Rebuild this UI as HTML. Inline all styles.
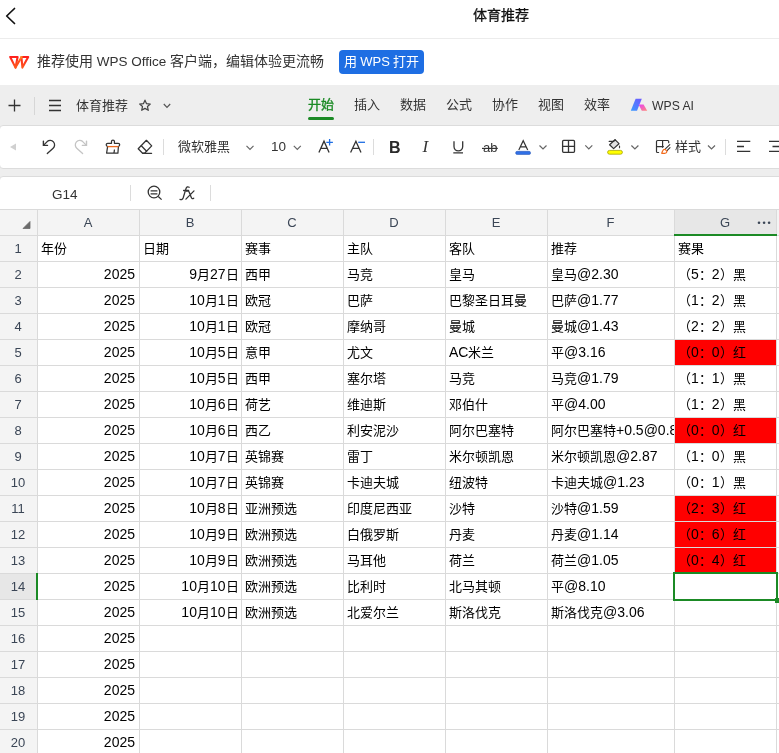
<!DOCTYPE html>
<html lang="zh-CN"><head><meta charset="utf-8"><title>体育推荐</title><style>
*{margin:0;padding:0;box-sizing:border-box}
html,body{width:779px;height:753px;overflow:hidden;background:#fff;font-family:"Liberation Sans",sans-serif;color:#000}
#root{position:absolute;left:0;top:0;width:779px;height:753px;background:#fff;will-change:transform;overflow:hidden}
.a{position:absolute;white-space:nowrap}
.t14{font-size:14px;line-height:20px}
.t13{font-size:13px;line-height:18px}
.cell{position:absolute;height:25px;line-height:25px;font-size:14px;white-space:nowrap;overflow:hidden;color:#000}
.rn{position:absolute;left:0;width:36px;height:25px;line-height:25px;text-align:center;font-size:13px;color:#3b4656}
.ch{position:absolute;top:210px;height:25px;line-height:25px;text-align:center;font-size:13px;color:#3b4656}
#ov{position:absolute;left:0;top:0}
</style></head><body>
<div id="root">
<div class="a t14" style="left:473px;top:5px;color:#111;-webkit-text-stroke:0.3px #111">体育推荐</div>
<div class="a" style="left:0;top:38px;width:779px;height:1px;background:#ececec"></div>
<div class="a t14" style="left:37px;top:51px;color:#333"><span style="font-size:14px">推荐使用</span><span style="font-size:13.5px"> WPS Office </span><span style="font-size:14px">客户端，编辑体验更流畅</span></div>
<div class="a" style="left:339px;top:50px;width:85px;height:24px;background:#1e6ee3;border-radius:4px;color:#fff;font-size:13px;line-height:24px;text-align:center"><span style="font-size:13px">用</span><span style="font-size:13px"> WPS </span><span style="font-size:13px">打开</span></div>
<div class="a" style="left:0;top:85px;width:779px;height:124px;background:#eeeeee"></div>
<div class="a" style="left:34px;top:97px;width:1px;height:18px;background:#d6d6d6"></div>
<div class="a t13" style="left:76px;top:97px;color:#333">体育推荐</div>
<div class="a t13" style="left:308px;top:96px;color:#1b8a25;-webkit-text-stroke:0.35px #1b8a25">开始</div>
<div class="a" style="left:308px;top:117px;width:26px;height:3px;background:#1b8a25;border-radius:1.5px"></div>
<div class="a t13" style="left:354px;top:96px;color:#333">插入</div>
<div class="a t13" style="left:400px;top:96px;color:#333">数据</div>
<div class="a t13" style="left:446px;top:96px;color:#333">公式</div>
<div class="a t13" style="left:492px;top:96px;color:#333">协作</div>
<div class="a t13" style="left:538px;top:96px;color:#333">视图</div>
<div class="a t13" style="left:584px;top:96px;color:#333">效率</div>
<div class="a" style="left:652px;top:97.3px;font-size:12.2px;line-height:18px;color:#333">WPS AI</div>
<div class="a" style="left:-1px;top:125px;width:790px;height:44px;background:#fff;border:1px solid #dcdcdc;border-radius:4px"></div>
<div class="a" style="left:163px;top:139px;width:1px;height:16px;background:#dcdcdc"></div>
<div class="a t13" style="left:178px;top:138px;color:#333">微软雅黑</div>
<div class="a" style="left:271px;top:138px;font-size:13.5px;line-height:18px;color:#333">10</div>
<div class="a" style="left:373px;top:139px;width:1px;height:16px;background:#dcdcdc"></div>
<div class="a" style="left:389px;top:138px;font-size:16px;line-height:20px;color:#2a2a2a;font-weight:bold">B</div>
<div class="a" style="left:422.5px;top:137px;font-size:17px;line-height:20px;color:#333;font-style:italic;font-family:'Liberation Serif',serif">I</div>
<div class="a" style="left:483px;top:138px;font-size:13px;line-height:20px;color:#333">ab</div>
<div class="a t13" style="left:675px;top:138px;color:#333">样式</div>
<div class="a" style="left:725px;top:139px;width:1px;height:16px;background:#dcdcdc"></div>
<div class="a" style="left:-1px;top:176px;width:790px;height:40px;background:#fff;border:1px solid #dcdcdc;border-radius:4px 4px 0 0"></div>
<div class="a" style="left:52px;top:184.5px;font-size:13.5px;line-height:20px;color:#333">G14</div>
<div class="a" style="left:130px;top:185px;width:1px;height:16px;background:#dcdcdc"></div>
<div class="a" style="left:210px;top:185px;width:1px;height:16px;background:#dcdcdc"></div>
<div class="a" style="left:0;top:209px;width:779px;height:26px;background:#f4f4f4"></div>
<div class="a" style="left:0;top:235px;width:37px;height:518px;background:#f4f4f4"></div>
<div class="a" style="left:674px;top:210px;width:102px;height:25px;background:#e7e7e7"></div>
<div class="a" style="left:0;top:574px;width:37px;height:25px;background:#e7e7e7"></div>
<div class="a" style="left:674px;top:339px;width:102px;height:26px;background:#ff0000"></div>
<div class="a" style="left:674px;top:417px;width:102px;height:26px;background:#ff0000"></div>
<div class="a" style="left:674px;top:495px;width:102px;height:26px;background:#ff0000"></div>
<div class="a" style="left:674px;top:521px;width:102px;height:26px;background:#ff0000"></div>
<div class="a" style="left:674px;top:547px;width:102px;height:26px;background:#ff0000"></div>
<div class="a" style="left:0;top:209px;width:779px;height:1px;background:#dadada"></div>
<div class="a" style="left:0;top:235px;width:779px;height:1px;background:#dadada"></div>
<div class="a" style="left:0;top:261px;width:779px;height:1px;background:#dadada"></div>
<div class="a" style="left:0;top:287px;width:779px;height:1px;background:#dadada"></div>
<div class="a" style="left:0;top:313px;width:779px;height:1px;background:#dadada"></div>
<div class="a" style="left:0;top:339px;width:779px;height:1px;background:#dadada"></div>
<div class="a" style="left:0;top:365px;width:779px;height:1px;background:#dadada"></div>
<div class="a" style="left:0;top:391px;width:779px;height:1px;background:#dadada"></div>
<div class="a" style="left:0;top:417px;width:779px;height:1px;background:#dadada"></div>
<div class="a" style="left:0;top:443px;width:779px;height:1px;background:#dadada"></div>
<div class="a" style="left:0;top:469px;width:779px;height:1px;background:#dadada"></div>
<div class="a" style="left:0;top:495px;width:779px;height:1px;background:#dadada"></div>
<div class="a" style="left:0;top:521px;width:779px;height:1px;background:#dadada"></div>
<div class="a" style="left:0;top:547px;width:779px;height:1px;background:#dadada"></div>
<div class="a" style="left:0;top:573px;width:779px;height:1px;background:#dadada"></div>
<div class="a" style="left:0;top:599px;width:779px;height:1px;background:#dadada"></div>
<div class="a" style="left:0;top:625px;width:779px;height:1px;background:#dadada"></div>
<div class="a" style="left:0;top:651px;width:779px;height:1px;background:#dadada"></div>
<div class="a" style="left:0;top:677px;width:779px;height:1px;background:#dadada"></div>
<div class="a" style="left:0;top:703px;width:779px;height:1px;background:#dadada"></div>
<div class="a" style="left:0;top:729px;width:779px;height:1px;background:#dadada"></div>
<div class="a" style="left:37px;top:209px;width:1px;height:544px;background:#dadada"></div>
<div class="a" style="left:139px;top:209px;width:1px;height:544px;background:#dadada"></div>
<div class="a" style="left:241px;top:209px;width:1px;height:544px;background:#dadada"></div>
<div class="a" style="left:343px;top:209px;width:1px;height:544px;background:#dadada"></div>
<div class="a" style="left:445px;top:209px;width:1px;height:544px;background:#dadada"></div>
<div class="a" style="left:547px;top:209px;width:1px;height:544px;background:#dadada"></div>
<div class="a" style="left:674px;top:209px;width:1px;height:544px;background:#dadada"></div>
<div class="a" style="left:776px;top:209px;width:1px;height:544px;background:#dadada"></div>
<div class="ch" style="left:37px;width:102px">A</div>
<div class="ch" style="left:139px;width:102px">B</div>
<div class="ch" style="left:241px;width:102px">C</div>
<div class="ch" style="left:343px;width:102px">D</div>
<div class="ch" style="left:445px;width:102px">E</div>
<div class="ch" style="left:547px;width:127px">F</div>
<div class="ch" style="left:674px;width:102px">G</div>
<div class="a" style="left:674px;top:234px;width:103px;height:2px;background:#1b8a25"></div>
<div class="rn" style="top:236px">1</div>
<div class="rn" style="top:262px">2</div>
<div class="rn" style="top:288px">3</div>
<div class="rn" style="top:314px">4</div>
<div class="rn" style="top:340px">5</div>
<div class="rn" style="top:366px">6</div>
<div class="rn" style="top:392px">7</div>
<div class="rn" style="top:418px">8</div>
<div class="rn" style="top:444px">9</div>
<div class="rn" style="top:470px">10</div>
<div class="rn" style="top:496px">11</div>
<div class="rn" style="top:522px">12</div>
<div class="rn" style="top:548px">13</div>
<div class="rn" style="top:574px">14</div>
<div class="rn" style="top:600px">15</div>
<div class="rn" style="top:626px">16</div>
<div class="rn" style="top:652px">17</div>
<div class="rn" style="top:678px">18</div>
<div class="rn" style="top:704px">19</div>
<div class="rn" style="top:730px">20</div>
<div class="a" style="left:36px;top:573px;width:2px;height:27px;background:#1b8a25"></div>
<div class="cell" style="left:38px;width:101px;top:236px;padding-left:3px"><span style="font-size:13px">年份</span></div>
<div class="cell" style="left:140px;width:101px;top:236px;padding-left:3px"><span style="font-size:13px">日期</span></div>
<div class="cell" style="left:242px;width:101px;top:236px;padding-left:3px"><span style="font-size:13px">赛事</span></div>
<div class="cell" style="left:344px;width:101px;top:236px;padding-left:3px"><span style="font-size:13px">主队</span></div>
<div class="cell" style="left:446px;width:101px;top:236px;padding-left:3px"><span style="font-size:13px">客队</span></div>
<div class="cell" style="left:548px;width:126px;top:236px;padding-left:3px"><span style="font-size:13px">推荐</span></div>
<div class="cell" style="left:675px;width:101px;top:236px;padding-left:3px"><span style="font-size:13px">赛果</span></div>
<div class="cell" style="left:38px;width:101px;top:262px;text-align:right;padding-right:4px"><span style="font-size:14px">2025</span></div>
<div class="cell" style="left:140px;width:101px;top:262px;text-align:right;padding-right:2.5px"><span style="font-size:14px">9</span><span style="font-size:13px">月</span><span style="font-size:14px">27</span><span style="font-size:13px">日</span></div>
<div class="cell" style="left:242px;width:101px;top:262px;padding-left:3px"><span style="font-size:13px">西甲</span></div>
<div class="cell" style="left:344px;width:101px;top:262px;padding-left:3px"><span style="font-size:13px">马竞</span></div>
<div class="cell" style="left:446px;width:101px;top:262px;padding-left:3px"><span style="font-size:13px">皇马</span></div>
<div class="cell" style="left:548px;width:126px;top:262px;padding-left:3px"><span style="font-size:13px">皇马</span><span style="font-size:14px">@2.30</span></div>
<div class="cell" style="left:675px;width:101px;top:262px;padding-left:3px"><span style="font-size:13px">（</span><span style="font-size:14px">5</span><span style="font-size:13px">：</span><span style="font-size:14px">2</span><span style="font-size:13px">）黑</span></div>
<div class="cell" style="left:38px;width:101px;top:288px;text-align:right;padding-right:4px"><span style="font-size:14px">2025</span></div>
<div class="cell" style="left:140px;width:101px;top:288px;text-align:right;padding-right:2.5px"><span style="font-size:14px">10</span><span style="font-size:13px">月</span><span style="font-size:14px">1</span><span style="font-size:13px">日</span></div>
<div class="cell" style="left:242px;width:101px;top:288px;padding-left:3px"><span style="font-size:13px">欧冠</span></div>
<div class="cell" style="left:344px;width:101px;top:288px;padding-left:3px"><span style="font-size:13px">巴萨</span></div>
<div class="cell" style="left:446px;width:101px;top:288px;padding-left:3px"><span style="font-size:13px">巴黎圣日耳曼</span></div>
<div class="cell" style="left:548px;width:126px;top:288px;padding-left:3px"><span style="font-size:13px">巴萨</span><span style="font-size:14px">@1.77</span></div>
<div class="cell" style="left:675px;width:101px;top:288px;padding-left:3px"><span style="font-size:13px">（</span><span style="font-size:14px">1</span><span style="font-size:13px">：</span><span style="font-size:14px">2</span><span style="font-size:13px">）黑</span></div>
<div class="cell" style="left:38px;width:101px;top:314px;text-align:right;padding-right:4px"><span style="font-size:14px">2025</span></div>
<div class="cell" style="left:140px;width:101px;top:314px;text-align:right;padding-right:2.5px"><span style="font-size:14px">10</span><span style="font-size:13px">月</span><span style="font-size:14px">1</span><span style="font-size:13px">日</span></div>
<div class="cell" style="left:242px;width:101px;top:314px;padding-left:3px"><span style="font-size:13px">欧冠</span></div>
<div class="cell" style="left:344px;width:101px;top:314px;padding-left:3px"><span style="font-size:13px">摩纳哥</span></div>
<div class="cell" style="left:446px;width:101px;top:314px;padding-left:3px"><span style="font-size:13px">曼城</span></div>
<div class="cell" style="left:548px;width:126px;top:314px;padding-left:3px"><span style="font-size:13px">曼城</span><span style="font-size:14px">@1.43</span></div>
<div class="cell" style="left:675px;width:101px;top:314px;padding-left:3px"><span style="font-size:13px">（</span><span style="font-size:14px">2</span><span style="font-size:13px">：</span><span style="font-size:14px">2</span><span style="font-size:13px">）黑</span></div>
<div class="cell" style="left:38px;width:101px;top:340px;text-align:right;padding-right:4px"><span style="font-size:14px">2025</span></div>
<div class="cell" style="left:140px;width:101px;top:340px;text-align:right;padding-right:2.5px"><span style="font-size:14px">10</span><span style="font-size:13px">月</span><span style="font-size:14px">5</span><span style="font-size:13px">日</span></div>
<div class="cell" style="left:242px;width:101px;top:340px;padding-left:3px"><span style="font-size:13px">意甲</span></div>
<div class="cell" style="left:344px;width:101px;top:340px;padding-left:3px"><span style="font-size:13px">尤文</span></div>
<div class="cell" style="left:446px;width:101px;top:340px;padding-left:3px"><span style="font-size:14px">AC</span><span style="font-size:13px">米兰</span></div>
<div class="cell" style="left:548px;width:126px;top:340px;padding-left:3px"><span style="font-size:13px">平</span><span style="font-size:14px">@3.16</span></div>
<div class="cell" style="left:675px;width:101px;top:340px;padding-left:3px"><span style="font-size:13px">（</span><span style="font-size:14px">0</span><span style="font-size:13px">：</span><span style="font-size:14px">0</span><span style="font-size:13px">）红</span></div>
<div class="cell" style="left:38px;width:101px;top:366px;text-align:right;padding-right:4px"><span style="font-size:14px">2025</span></div>
<div class="cell" style="left:140px;width:101px;top:366px;text-align:right;padding-right:2.5px"><span style="font-size:14px">10</span><span style="font-size:13px">月</span><span style="font-size:14px">5</span><span style="font-size:13px">日</span></div>
<div class="cell" style="left:242px;width:101px;top:366px;padding-left:3px"><span style="font-size:13px">西甲</span></div>
<div class="cell" style="left:344px;width:101px;top:366px;padding-left:3px"><span style="font-size:13px">塞尔塔</span></div>
<div class="cell" style="left:446px;width:101px;top:366px;padding-left:3px"><span style="font-size:13px">马竞</span></div>
<div class="cell" style="left:548px;width:126px;top:366px;padding-left:3px"><span style="font-size:13px">马竞</span><span style="font-size:14px">@1.79</span></div>
<div class="cell" style="left:675px;width:101px;top:366px;padding-left:3px"><span style="font-size:13px">（</span><span style="font-size:14px">1</span><span style="font-size:13px">：</span><span style="font-size:14px">1</span><span style="font-size:13px">）黑</span></div>
<div class="cell" style="left:38px;width:101px;top:392px;text-align:right;padding-right:4px"><span style="font-size:14px">2025</span></div>
<div class="cell" style="left:140px;width:101px;top:392px;text-align:right;padding-right:2.5px"><span style="font-size:14px">10</span><span style="font-size:13px">月</span><span style="font-size:14px">6</span><span style="font-size:13px">日</span></div>
<div class="cell" style="left:242px;width:101px;top:392px;padding-left:3px"><span style="font-size:13px">荷艺</span></div>
<div class="cell" style="left:344px;width:101px;top:392px;padding-left:3px"><span style="font-size:13px">维迪斯</span></div>
<div class="cell" style="left:446px;width:101px;top:392px;padding-left:3px"><span style="font-size:13px">邓伯什</span></div>
<div class="cell" style="left:548px;width:126px;top:392px;padding-left:3px"><span style="font-size:13px">平</span><span style="font-size:14px">@4.00</span></div>
<div class="cell" style="left:675px;width:101px;top:392px;padding-left:3px"><span style="font-size:13px">（</span><span style="font-size:14px">1</span><span style="font-size:13px">：</span><span style="font-size:14px">2</span><span style="font-size:13px">）黑</span></div>
<div class="cell" style="left:38px;width:101px;top:418px;text-align:right;padding-right:4px"><span style="font-size:14px">2025</span></div>
<div class="cell" style="left:140px;width:101px;top:418px;text-align:right;padding-right:2.5px"><span style="font-size:14px">10</span><span style="font-size:13px">月</span><span style="font-size:14px">6</span><span style="font-size:13px">日</span></div>
<div class="cell" style="left:242px;width:101px;top:418px;padding-left:3px"><span style="font-size:13px">西乙</span></div>
<div class="cell" style="left:344px;width:101px;top:418px;padding-left:3px"><span style="font-size:13px">利安泥沙</span></div>
<div class="cell" style="left:446px;width:101px;top:418px;padding-left:3px"><span style="font-size:13px">阿尔巴塞特</span></div>
<div class="cell" style="left:548px;width:126px;top:418px;padding-left:3px"><span style="font-size:13px">阿尔巴塞特</span><span style="font-size:14px">+0.5@0.8</span></div>
<div class="cell" style="left:675px;width:101px;top:418px;padding-left:3px"><span style="font-size:13px">（</span><span style="font-size:14px">0</span><span style="font-size:13px">：</span><span style="font-size:14px">0</span><span style="font-size:13px">）红</span></div>
<div class="cell" style="left:38px;width:101px;top:444px;text-align:right;padding-right:4px"><span style="font-size:14px">2025</span></div>
<div class="cell" style="left:140px;width:101px;top:444px;text-align:right;padding-right:2.5px"><span style="font-size:14px">10</span><span style="font-size:13px">月</span><span style="font-size:14px">7</span><span style="font-size:13px">日</span></div>
<div class="cell" style="left:242px;width:101px;top:444px;padding-left:3px"><span style="font-size:13px">英锦赛</span></div>
<div class="cell" style="left:344px;width:101px;top:444px;padding-left:3px"><span style="font-size:13px">雷丁</span></div>
<div class="cell" style="left:446px;width:101px;top:444px;padding-left:3px"><span style="font-size:13px">米尔顿凯恩</span></div>
<div class="cell" style="left:548px;width:126px;top:444px;padding-left:3px"><span style="font-size:13px">米尔顿凯恩</span><span style="font-size:14px">@2.87</span></div>
<div class="cell" style="left:675px;width:101px;top:444px;padding-left:3px"><span style="font-size:13px">（</span><span style="font-size:14px">1</span><span style="font-size:13px">：</span><span style="font-size:14px">0</span><span style="font-size:13px">）黑</span></div>
<div class="cell" style="left:38px;width:101px;top:470px;text-align:right;padding-right:4px"><span style="font-size:14px">2025</span></div>
<div class="cell" style="left:140px;width:101px;top:470px;text-align:right;padding-right:2.5px"><span style="font-size:14px">10</span><span style="font-size:13px">月</span><span style="font-size:14px">7</span><span style="font-size:13px">日</span></div>
<div class="cell" style="left:242px;width:101px;top:470px;padding-left:3px"><span style="font-size:13px">英锦赛</span></div>
<div class="cell" style="left:344px;width:101px;top:470px;padding-left:3px"><span style="font-size:13px">卡迪夫城</span></div>
<div class="cell" style="left:446px;width:101px;top:470px;padding-left:3px"><span style="font-size:13px">纽波特</span></div>
<div class="cell" style="left:548px;width:126px;top:470px;padding-left:3px"><span style="font-size:13px">卡迪夫城</span><span style="font-size:14px">@1.23</span></div>
<div class="cell" style="left:675px;width:101px;top:470px;padding-left:3px"><span style="font-size:13px">（</span><span style="font-size:14px">0</span><span style="font-size:13px">：</span><span style="font-size:14px">1</span><span style="font-size:13px">）黑</span></div>
<div class="cell" style="left:38px;width:101px;top:496px;text-align:right;padding-right:4px"><span style="font-size:14px">2025</span></div>
<div class="cell" style="left:140px;width:101px;top:496px;text-align:right;padding-right:2.5px"><span style="font-size:14px">10</span><span style="font-size:13px">月</span><span style="font-size:14px">8</span><span style="font-size:13px">日</span></div>
<div class="cell" style="left:242px;width:101px;top:496px;padding-left:3px"><span style="font-size:13px">亚洲预选</span></div>
<div class="cell" style="left:344px;width:101px;top:496px;padding-left:3px"><span style="font-size:13px">印度尼西亚</span></div>
<div class="cell" style="left:446px;width:101px;top:496px;padding-left:3px"><span style="font-size:13px">沙特</span></div>
<div class="cell" style="left:548px;width:126px;top:496px;padding-left:3px"><span style="font-size:13px">沙特</span><span style="font-size:14px">@1.59</span></div>
<div class="cell" style="left:675px;width:101px;top:496px;padding-left:3px"><span style="font-size:13px">（</span><span style="font-size:14px">2</span><span style="font-size:13px">：</span><span style="font-size:14px">3</span><span style="font-size:13px">）红</span></div>
<div class="cell" style="left:38px;width:101px;top:522px;text-align:right;padding-right:4px"><span style="font-size:14px">2025</span></div>
<div class="cell" style="left:140px;width:101px;top:522px;text-align:right;padding-right:2.5px"><span style="font-size:14px">10</span><span style="font-size:13px">月</span><span style="font-size:14px">9</span><span style="font-size:13px">日</span></div>
<div class="cell" style="left:242px;width:101px;top:522px;padding-left:3px"><span style="font-size:13px">欧洲预选</span></div>
<div class="cell" style="left:344px;width:101px;top:522px;padding-left:3px"><span style="font-size:13px">白俄罗斯</span></div>
<div class="cell" style="left:446px;width:101px;top:522px;padding-left:3px"><span style="font-size:13px">丹麦</span></div>
<div class="cell" style="left:548px;width:126px;top:522px;padding-left:3px"><span style="font-size:13px">丹麦</span><span style="font-size:14px">@1.14</span></div>
<div class="cell" style="left:675px;width:101px;top:522px;padding-left:3px"><span style="font-size:13px">（</span><span style="font-size:14px">0</span><span style="font-size:13px">：</span><span style="font-size:14px">6</span><span style="font-size:13px">）红</span></div>
<div class="cell" style="left:38px;width:101px;top:548px;text-align:right;padding-right:4px"><span style="font-size:14px">2025</span></div>
<div class="cell" style="left:140px;width:101px;top:548px;text-align:right;padding-right:2.5px"><span style="font-size:14px">10</span><span style="font-size:13px">月</span><span style="font-size:14px">9</span><span style="font-size:13px">日</span></div>
<div class="cell" style="left:242px;width:101px;top:548px;padding-left:3px"><span style="font-size:13px">欧洲预选</span></div>
<div class="cell" style="left:344px;width:101px;top:548px;padding-left:3px"><span style="font-size:13px">马耳他</span></div>
<div class="cell" style="left:446px;width:101px;top:548px;padding-left:3px"><span style="font-size:13px">荷兰</span></div>
<div class="cell" style="left:548px;width:126px;top:548px;padding-left:3px"><span style="font-size:13px">荷兰</span><span style="font-size:14px">@1.05</span></div>
<div class="cell" style="left:675px;width:101px;top:548px;padding-left:3px"><span style="font-size:13px">（</span><span style="font-size:14px">0</span><span style="font-size:13px">：</span><span style="font-size:14px">4</span><span style="font-size:13px">）红</span></div>
<div class="cell" style="left:38px;width:101px;top:574px;text-align:right;padding-right:4px"><span style="font-size:14px">2025</span></div>
<div class="cell" style="left:140px;width:101px;top:574px;text-align:right;padding-right:2.5px"><span style="font-size:14px">10</span><span style="font-size:13px">月</span><span style="font-size:14px">10</span><span style="font-size:13px">日</span></div>
<div class="cell" style="left:242px;width:101px;top:574px;padding-left:3px"><span style="font-size:13px">欧洲预选</span></div>
<div class="cell" style="left:344px;width:101px;top:574px;padding-left:3px"><span style="font-size:13px">比利时</span></div>
<div class="cell" style="left:446px;width:101px;top:574px;padding-left:3px"><span style="font-size:13px">北马其顿</span></div>
<div class="cell" style="left:548px;width:126px;top:574px;padding-left:3px"><span style="font-size:13px">平</span><span style="font-size:14px">@8.10</span></div>
<div class="cell" style="left:38px;width:101px;top:600px;text-align:right;padding-right:4px"><span style="font-size:14px">2025</span></div>
<div class="cell" style="left:140px;width:101px;top:600px;text-align:right;padding-right:2.5px"><span style="font-size:14px">10</span><span style="font-size:13px">月</span><span style="font-size:14px">10</span><span style="font-size:13px">日</span></div>
<div class="cell" style="left:242px;width:101px;top:600px;padding-left:3px"><span style="font-size:13px">欧洲预选</span></div>
<div class="cell" style="left:344px;width:101px;top:600px;padding-left:3px"><span style="font-size:13px">北爱尔兰</span></div>
<div class="cell" style="left:446px;width:101px;top:600px;padding-left:3px"><span style="font-size:13px">斯洛伐克</span></div>
<div class="cell" style="left:548px;width:126px;top:600px;padding-left:3px"><span style="font-size:13px">斯洛伐克</span><span style="font-size:14px">@3.06</span></div>
<div class="cell" style="left:38px;width:101px;top:626px;text-align:right;padding-right:4px"><span style="font-size:14px">2025</span></div>
<div class="cell" style="left:38px;width:101px;top:652px;text-align:right;padding-right:4px"><span style="font-size:14px">2025</span></div>
<div class="cell" style="left:38px;width:101px;top:678px;text-align:right;padding-right:4px"><span style="font-size:14px">2025</span></div>
<div class="cell" style="left:38px;width:101px;top:704px;text-align:right;padding-right:4px"><span style="font-size:14px">2025</span></div>
<div class="cell" style="left:38px;width:101px;top:730px;text-align:right;padding-right:4px"><span style="font-size:14px">2025</span></div>
<div class="a" style="left:673px;top:572px;width:105px;height:29px;border:2px solid #1b8a25"></div>
<div class="a" style="left:775px;top:598px;width:4px;height:5px;background:#1b8a25"></div>
<svg id="ov" width="779" height="753" viewBox="0 0 779 753"><polyline points="14.5,8.5 6.7,16 14.5,23.5" fill="none" stroke="#111" stroke-width="1.7" stroke-linecap="round" stroke-linejoin="round"/><defs><linearGradient id="wo" gradientUnits="userSpaceOnUse" x1="0" y1="56" x2="0" y2="68"><stop offset="0" stop-color="#ff9a1f"/><stop offset="0.5" stop-color="#ff4a1a"/><stop offset="1" stop-color="#ff5a1e"/></linearGradient><linearGradient id="wr" gradientUnits="userSpaceOnUse" x1="0" y1="56" x2="0" y2="68"><stop offset="0" stop-color="#ff1c1c"/><stop offset="1" stop-color="#ff5a1e"/></linearGradient><linearGradient id="aib" x1="1" y1="0" x2="0" y2="1"><stop offset="0" stop-color="#6f56ff"/><stop offset="1" stop-color="#3a9cff"/></linearGradient><linearGradient id="aip" x1="0" y1="0" x2="1" y2="1"><stop offset="0" stop-color="#e83ff5"/><stop offset="1" stop-color="#ff8a7a"/></linearGradient></defs><g fill="none" stroke="url(#wr)" stroke-width="2.1" stroke-linejoin="round" stroke-linecap="round"><path d="M10.2,57 H17.6 L15.5,67.6 Z"/><path d="M21.4,57 H28.2 L22.4,67.6 Z"/></g><path d="M15.5,67.6 L21.6,57" stroke="url(#wo)" stroke-width="2.1" stroke-linecap="round"/><path d="M14.5,99.5 V111.5 M8.5,105.5 H20.5" stroke="#333" stroke-width="1.3"/><path d="M49,100.5 H61 M49,105.5 H61 M49,110.5 H61" stroke="#333" stroke-width="1.3"/><g transform="translate(138.5,99) scale(0.54)"><path d="M12,2.2 L14.9,8.6 L21.8,9.3 L16.6,14 L18.1,20.9 L12,17.3 L5.9,20.9 L7.4,14 L2.2,9.3 L9.1,8.6 Z" fill="none" stroke="#444" stroke-width="2.3" stroke-linejoin="round"/></g><polyline points="163.8,104 167,107.3 170.2,104" fill="none" stroke="#555" stroke-width="1.2"/><path d="M630.8,110.8 L635.6,98.8 L641.8,98.8 L637,110.8 Z" fill="url(#aib)"/><path d="M638.6,104.6 L643.6,104.6 L647.2,110.8 L641.8,110.8 Z" fill="url(#aip)"/><path d="M16,143.5 V150.5 L10,147 Z" fill="#d0d0d0"/><path d="M43.7,145.1 L47.2,141.6 A4.4,4.4 0 1 1 53.13,148.17 L47.3,153.6" fill="none" stroke="#333" stroke-width="1.3" stroke-linecap="round"/><path d="M43.4,141.1 V145.4 H47.5" fill="none" stroke="#333" stroke-width="1.4" stroke-linecap="round"/><g transform="translate(129.9,0) scale(-1,1)"><path d="M43.7,145.1 L47.2,141.6 A4.4,4.4 0 1 1 53.13,148.17 L47.3,153.6" fill="none" stroke="#c4c4c4" stroke-width="1.3" stroke-linecap="round"/><path d="M43.4,141.1 V145.4 H47.5" fill="none" stroke="#c4c4c4" stroke-width="1.4" stroke-linecap="round"/></g><path d="M107.6,146.3 Q106.2,146.3 106.2,144.8 Q106.2,143.3 107.8,143.3 H111.5 V141.3 Q111.5,140 112.95,140 Q114.4,140 114.4,141.3 V143.3 H118.2 Q119.7,143.3 119.7,144.8 Q119.7,146.3 118.3,146.3" fill="none" stroke="#333" stroke-width="1.25" stroke-linejoin="round"/><path d="M107.6,146.6 L106.6,153.2 H117.9 L118.4,146.6 M114.4,150 Q114.3,152 113.7,153.2" fill="none" stroke="#333" stroke-width="1.25" stroke-linejoin="round" stroke-linecap="round"/><path d="M107.5,146.6 H118.5" stroke="#ec6a1f" stroke-width="1.3"/><path d="M146.4,140.3 L151.7,145.9 L144.6,153.2 H142.6 L138.2,148.7 Z" fill="none" stroke="#333" stroke-width="1.25" stroke-linejoin="round"/><path d="M141.3,145.7 L146.6,151.2 M142.6,153.3 H151.6" fill="none" stroke="#333" stroke-width="1.25" stroke-linecap="round"/><polyline points="246.5,145.8 250.0,149.3 253.5,145.8" fill="none" stroke="#666" stroke-width="1.2"/><polyline points="293.8,145.8 297.3,149.3 300.8,145.8" fill="none" stroke="#666" stroke-width="1.2"/><path d="M318.9,152.6 L324,141.2 L329.1,152.6 M320.7,148.3 H327.3" fill="none" stroke="#333" stroke-width="1.3"/><path d="M329.6,139 V145.6 M326.3,142.3 H332.9" stroke="#1e6ee3" stroke-width="1.3"/><path d="M350.6,152.6 L355.9,141.2 L361,152.6 M352.4,148.3 H359.2" fill="none" stroke="#333" stroke-width="1.3"/><path d="M358.2,142.3 H365" stroke="#1e6ee3" stroke-width="1.3"/><path d="M454,141.3 V146.6 A4.35,4.35 0 0 0 462.7,146.6 V141.3 M453.3,152.8 H463" fill="none" stroke="#333" stroke-width="1.3"/><path d="M482,148.4 H497.8" stroke="#333" stroke-width="1.2"/><path d="M518.8,150 L523.2,140.7 L527.7,150 M520.3,146.8 H526.2" fill="none" stroke="#333" stroke-width="1.2"/><rect x="515.6" y="151.3" width="15" height="3.2" rx="1.6" fill="#2f6fe6" stroke="#1f4fb0" stroke-width="0.5"/><polyline points="539.5,145.5 543.0,149.0 546.5,145.5" fill="none" stroke="#666" stroke-width="1.2"/><rect x="562.6" y="140.4" width="11.9" height="11.9" rx="1" fill="none" stroke="#333" stroke-width="1.3"/><path d="M568.5,140.4 V152.3 M562.6,146.3 H574.5" stroke="#333" stroke-width="1.3"/><polyline points="585.3,145.3 588.8,148.8 592.3,145.3" fill="none" stroke="#666" stroke-width="1.2"/><path d="M609.6,144.8 L615,139.7 L619,143.7 L613.6,148.6 Z" fill="#e2e2e2" stroke="#333" stroke-width="1.2" stroke-linejoin="round"/><path d="M609.2,141.4 H613.6 L615.2,139.8" fill="none" stroke="#333" stroke-width="1.2" stroke-linecap="round"/><path d="M619.5,145 Q621,147.2 619.5,148.7 Q618,147.2 619.5,145 Z" fill="#333"/><rect x="607.6" y="150.4" width="14.8" height="3.8" rx="1.9" fill="#ffff00" stroke="#a8a300" stroke-width="0.8"/><polyline points="631.4,145.5 634.9,149.0 638.4,145.5" fill="none" stroke="#666" stroke-width="1.2"/><path d="M658.6,152.5 H657.6 Q656.5,152.5 656.5,151.4 V141.6 Q656.5,140.5 657.6,140.5 H667.6 Q668.7,140.5 668.7,141.6 V142.7 M662.6,140.5 V147.3 M656.5,146.6 H663.4" fill="none" stroke="#333" stroke-width="1.2" stroke-linecap="round"/><path d="M669.8,144.6 L665.6,148.6 M670,147.7 L667.3,150.4" fill="none" stroke="#333" stroke-width="1.1" stroke-linecap="round"/><path d="M665.2,149.4 Q663.2,149.2 662.6,151 L661.7,153.3 H664.7 Q666.6,153.3 667,151.3 Z" fill="none" stroke="#f26b1d" stroke-width="1.2" stroke-linejoin="round"/><polyline points="708,145.5 711.5,149.0 715,145.5" fill="none" stroke="#666" stroke-width="1.2"/><path d="M737,141.3 H750.3 M737,146.5 H744 M737,151.3 H750.3 M769,141.3 H782.3 M772.5,146.5 H779 M769,151.3 H782.3" stroke="#333" stroke-width="1.3"/><circle cx="154" cy="192" r="5.8" fill="none" stroke="#333" stroke-width="1.3"/><path d="M150.6,190.8 H157.4 M150.6,193.9 H157.4 M158.3,196.5 L161.6,199.6" stroke="#333" stroke-width="1.3"/><path d="M189.2,187.2 Q187,185.9 186,188.6 L183.2,197.8 Q182.4,200.2 180,199.3 M183.6,190.5 H188.6" fill="none" stroke="#333" stroke-width="1.3" stroke-linecap="round"/><path d="M186.8,191.2 Q188.3,189.9 189.2,192.2 L191.2,197.2 Q192,199.4 193.7,198.2 M194,190.9 L185.9,199.1" fill="none" stroke="#333" stroke-width="1.3" stroke-linecap="round"/><circle cx="759" cy="222.8" r="1.3" fill="#3b4656"/><circle cx="764.1" cy="222.8" r="1.3" fill="#3b4656"/><circle cx="769.1" cy="222.8" r="1.3" fill="#3b4656"/><path d="M30,221.5 V228.5 H23 Z" fill="#6b6b6b" stroke="#6b6b6b" stroke-width="0.8" stroke-linejoin="round"/></svg>
</div>
</body></html>
